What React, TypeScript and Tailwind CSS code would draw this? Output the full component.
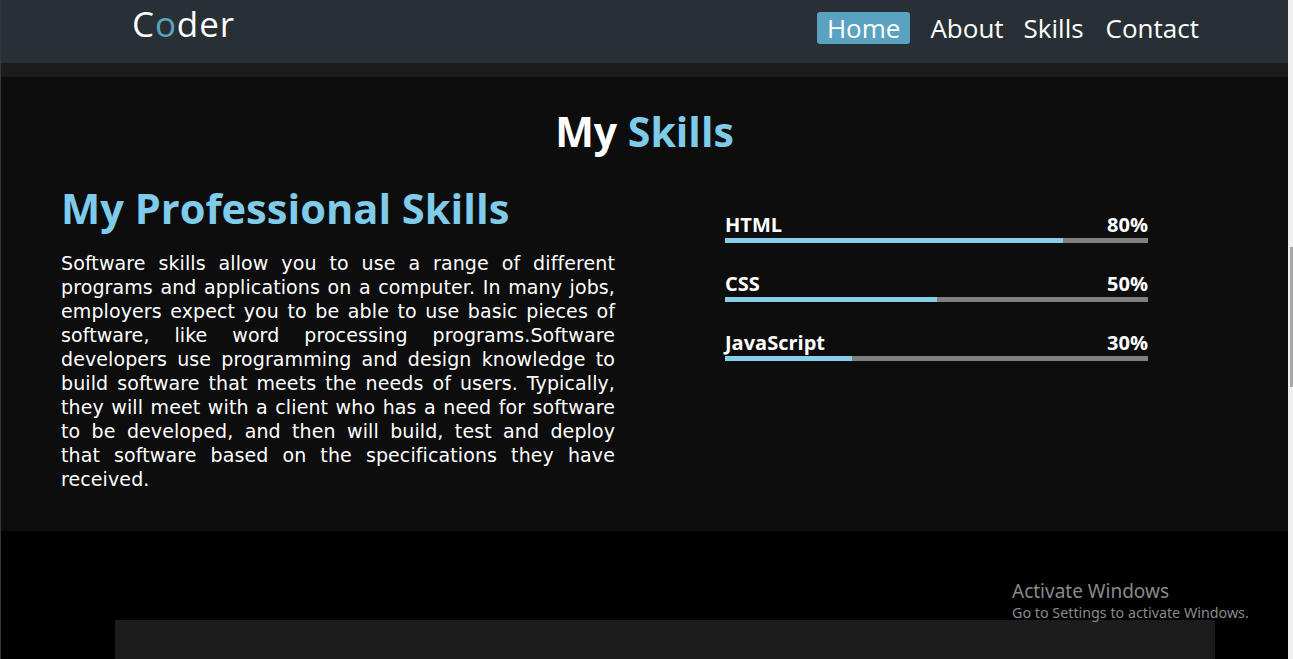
import React from 'react'

const skills = [
  { name: 'HTML', value: 80 },
  { name: 'CSS', value: 50 },
  { name: 'JavaScript', value: 30 },
]

const body =
  'Software skills allow you to use a range of different programs and applications on a computer. In many jobs, employers expect you to be able to use basic pieces of software, like word processing programs.Software developers use programming and design knowledge to build software that meets the needs of users. Typically, they will meet with a client who has a need for software to be developed, and then will build, test and deploy that\u00a0software based on the specifications they have received.'

export default function App() {
  return (
    <div className="relative flex h-[659px] w-full overflow-hidden bg-black font-['Open_Sans',sans-serif] text-white">
      <div className="w-px shrink-0 bg-[#2c3a44]" />

      <div className="flex min-w-0 flex-1 flex-col">
        {/* nav */}
        <header className="flex h-[63px] shrink-0 items-start justify-between bg-[#283036] pl-[131px] pr-[89px]">
          <div className="text-[35px] leading-[48px] tracking-wide">
            C<span className="text-[#5aa2bf]">o</span>der
          </div>
          <nav className="mt-[12px] flex items-center gap-5 text-[26px] leading-[32px]">
            <a className="rounded-[3px] bg-[#5aa2bf] px-[10px]">Home</a>
            <a>About</a>
            <a>Skills</a>
            <a className="ml-[2px]">Contact</a>
          </nav>
        </header>
        <div className="h-[14px] shrink-0 bg-[#1c1c1c]" />

        {/* skills */}
        <section className="h-[454px] shrink-0 bg-[#0d0d0d]">
          <h2 className="mt-[30px] text-center text-[41px] font-bold leading-[48px]">
            My <span className="text-[#7fcbea]">Skills</span>
          </h2>
          <div className="mt-[26px] flex">
            <div className="ml-[60px] w-[554px]">
              <h3 className="text-[41.6px] font-bold leading-[54px] text-[#7fcbea]">My Professional Skills</h3>
              <p className="mt-[16px] text-justify font-['DejaVu_Sans',sans-serif] text-[19px] leading-[24px] tracking-[0.1px]">
                {body}
              </p>
            </div>
            <div className="ml-[110px] mt-[33px] flex w-[423px] flex-col gap-[30px]">
              {skills.map((s) => (
                <div key={s.name}>
                  <div className="flex justify-between text-[20px] font-bold leading-[22px]">
                    <span>{s.name}</span>
                    <span>{s.value}%</span>
                  </div>
                  <div className="mt-[2px] h-[5px] bg-[#808080]">
                    <div className="h-full bg-[#87ceeb]" style={{ width: `${s.value}%` }} />
                  </div>
                </div>
              ))}
            </div>
          </div>
        </section>

        {/* next section */}
        <section className="flex-1 pt-[89px]">
          <div className="ml-[114px] h-full w-[1100px] bg-[#1c1c1c]" />
        </section>
      </div>

      {/* scrollbar */}
      <div className="relative w-[5px] shrink-0 bg-[#f0f0f0]">
        <div className="absolute left-[2px] top-[247px] h-[140px] w-[3px] bg-[#a8a8a8]" />
      </div>

      {/* windows watermark */}
      <div className="pointer-events-none absolute left-[1012px] top-[579px] font-['Noto_Sans',sans-serif] text-[#8a8a8a]">
        <div className="text-[19px] leading-[24px]">Activate Windows</div>
        <div className="text-[14.3px] leading-[20px]">Go to Settings to activate Windows.</div>
      </div>
    </div>
  )
}
